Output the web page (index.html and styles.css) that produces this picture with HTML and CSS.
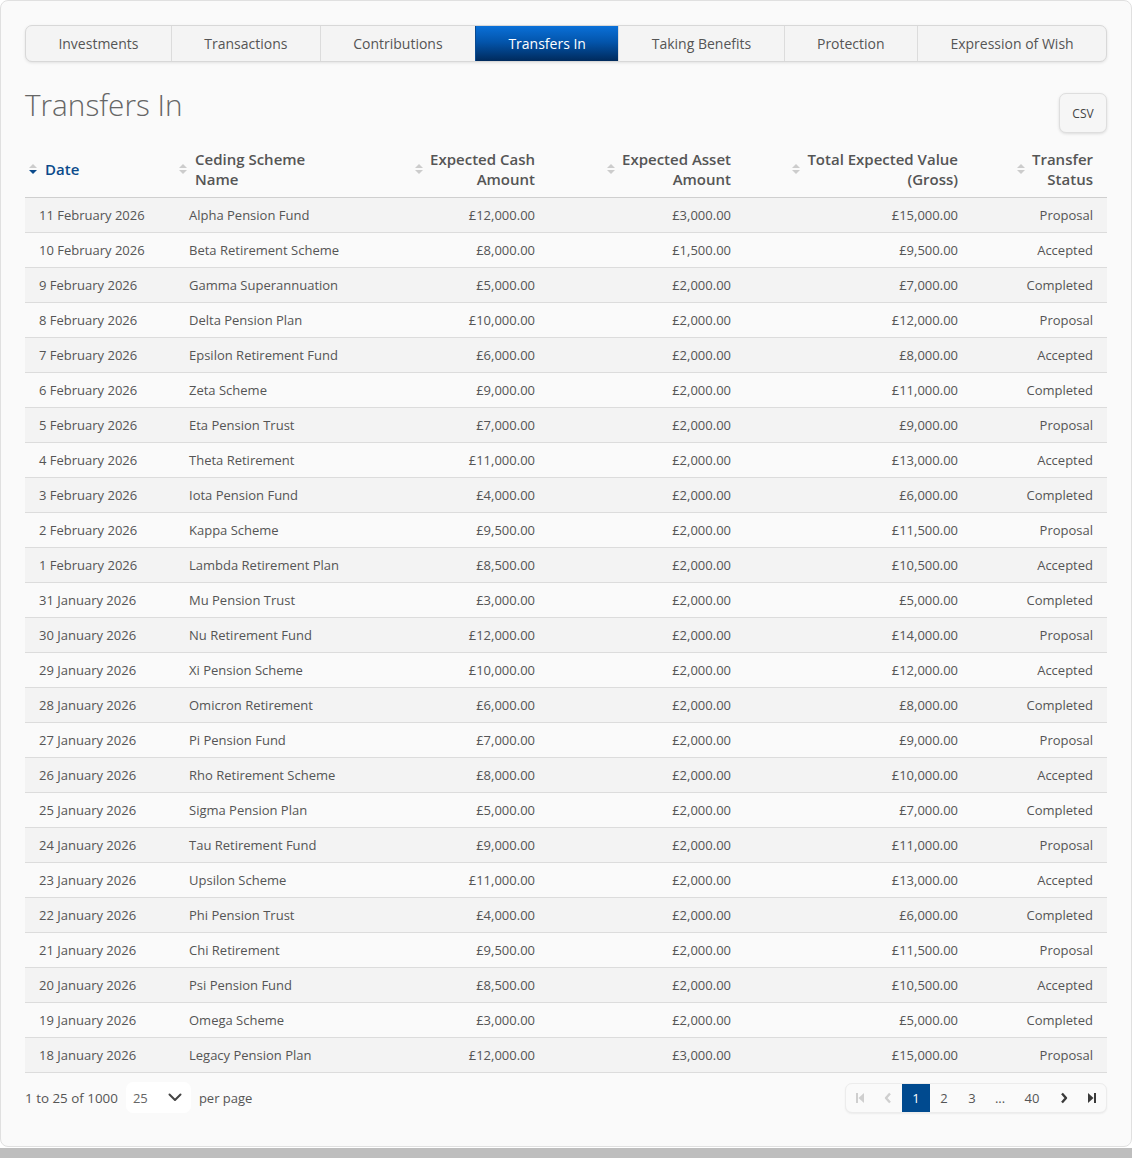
FILE: index.html
```html
<!DOCTYPE html>
<html lang="en">
<head>
<meta charset="utf-8">
<title>Transfers In</title>
<link rel="stylesheet" href="styles.css">
</head>
<body>
<div class="card">
  <nav class="tabs">
    <a class="tab">Investments</a>
    <a class="tab">Transactions</a>
    <a class="tab">Contributions</a>
    <a class="tab active">Transfers In</a>
    <a class="tab">Taking Benefits</a>
    <a class="tab">Protection</a>
    <a class="tab">Expression of Wish</a>
  </nav>

  <div class="title-row">
    <h1 class="title">Transfers In</h1>
    <button class="csv">CSV</button>
  </div>

  <table class="grid">
    <colgroup>
      <col class="c1"><col class="c2"><col class="c3"><col class="c4"><col class="c5"><col class="c6">
    </colgroup>
    <thead>
      <tr>
        <th><div class="th-in left sorted"><span class="sort"><i class="up"></i><i class="down on"></i></span><span class="lbl"><span>Date</span></span></div></th>
        <th><div class="th-in left"><span class="sort"><i class="up"></i><i class="down"></i></span><span class="lbl"><span>Ceding Scheme</span> <span>Name</span></span></div></th>
        <th><div class="th-in right"><span class="sort"><i class="up"></i><i class="down"></i></span><span class="lbl"><span>Expected Cash</span> <span>Amount</span></span></div></th>
        <th><div class="th-in right"><span class="sort"><i class="up"></i><i class="down"></i></span><span class="lbl"><span>Expected Asset</span> <span>Amount</span></span></div></th>
        <th><div class="th-in right"><span class="sort"><i class="up"></i><i class="down"></i></span><span class="lbl"><span>Total Expected Value</span> <span>(Gross)</span></span></div></th>
        <th><div class="th-in right"><span class="sort"><i class="up"></i><i class="down"></i></span><span class="lbl"><span>Transfer</span> <span>Status</span></span></div></th>
      </tr>
    </thead>
    <tbody>
      <tr><td>11 February 2026</td><td>Alpha Pension Fund</td><td class="num">£12,000.00</td><td class="num">£3,000.00</td><td class="num">£15,000.00</td><td class="num">Proposal</td></tr>
      <tr><td>10 February 2026</td><td>Beta Retirement Scheme</td><td class="num">£8,000.00</td><td class="num">£1,500.00</td><td class="num">£9,500.00</td><td class="num">Accepted</td></tr>
      <tr><td>9 February 2026</td><td>Gamma Superannuation</td><td class="num">£5,000.00</td><td class="num">£2,000.00</td><td class="num">£7,000.00</td><td class="num">Completed</td></tr>
      <tr><td>8 February 2026</td><td>Delta Pension Plan</td><td class="num">£10,000.00</td><td class="num">£2,000.00</td><td class="num">£12,000.00</td><td class="num">Proposal</td></tr>
      <tr><td>7 February 2026</td><td>Epsilon Retirement Fund</td><td class="num">£6,000.00</td><td class="num">£2,000.00</td><td class="num">£8,000.00</td><td class="num">Accepted</td></tr>
      <tr><td>6 February 2026</td><td>Zeta Scheme</td><td class="num">£9,000.00</td><td class="num">£2,000.00</td><td class="num">£11,000.00</td><td class="num">Completed</td></tr>
      <tr><td>5 February 2026</td><td>Eta Pension Trust</td><td class="num">£7,000.00</td><td class="num">£2,000.00</td><td class="num">£9,000.00</td><td class="num">Proposal</td></tr>
      <tr><td>4 February 2026</td><td>Theta Retirement</td><td class="num">£11,000.00</td><td class="num">£2,000.00</td><td class="num">£13,000.00</td><td class="num">Accepted</td></tr>
      <tr><td>3 February 2026</td><td>Iota Pension Fund</td><td class="num">£4,000.00</td><td class="num">£2,000.00</td><td class="num">£6,000.00</td><td class="num">Completed</td></tr>
      <tr><td>2 February 2026</td><td>Kappa Scheme</td><td class="num">£9,500.00</td><td class="num">£2,000.00</td><td class="num">£11,500.00</td><td class="num">Proposal</td></tr>
      <tr><td>1 February 2026</td><td>Lambda Retirement Plan</td><td class="num">£8,500.00</td><td class="num">£2,000.00</td><td class="num">£10,500.00</td><td class="num">Accepted</td></tr>
      <tr><td>31 January 2026</td><td>Mu Pension Trust</td><td class="num">£3,000.00</td><td class="num">£2,000.00</td><td class="num">£5,000.00</td><td class="num">Completed</td></tr>
      <tr><td>30 January 2026</td><td>Nu Retirement Fund</td><td class="num">£12,000.00</td><td class="num">£2,000.00</td><td class="num">£14,000.00</td><td class="num">Proposal</td></tr>
      <tr><td>29 January 2026</td><td>Xi Pension Scheme</td><td class="num">£10,000.00</td><td class="num">£2,000.00</td><td class="num">£12,000.00</td><td class="num">Accepted</td></tr>
      <tr><td>28 January 2026</td><td>Omicron Retirement</td><td class="num">£6,000.00</td><td class="num">£2,000.00</td><td class="num">£8,000.00</td><td class="num">Completed</td></tr>
      <tr><td>27 January 2026</td><td>Pi Pension Fund</td><td class="num">£7,000.00</td><td class="num">£2,000.00</td><td class="num">£9,000.00</td><td class="num">Proposal</td></tr>
      <tr><td>26 January 2026</td><td>Rho Retirement Scheme</td><td class="num">£8,000.00</td><td class="num">£2,000.00</td><td class="num">£10,000.00</td><td class="num">Accepted</td></tr>
      <tr><td>25 January 2026</td><td>Sigma Pension Plan</td><td class="num">£5,000.00</td><td class="num">£2,000.00</td><td class="num">£7,000.00</td><td class="num">Completed</td></tr>
      <tr><td>24 January 2026</td><td>Tau Retirement Fund</td><td class="num">£9,000.00</td><td class="num">£2,000.00</td><td class="num">£11,000.00</td><td class="num">Proposal</td></tr>
      <tr><td>23 January 2026</td><td>Upsilon Scheme</td><td class="num">£11,000.00</td><td class="num">£2,000.00</td><td class="num">£13,000.00</td><td class="num">Accepted</td></tr>
      <tr><td>22 January 2026</td><td>Phi Pension Trust</td><td class="num">£4,000.00</td><td class="num">£2,000.00</td><td class="num">£6,000.00</td><td class="num">Completed</td></tr>
      <tr><td>21 January 2026</td><td>Chi Retirement</td><td class="num">£9,500.00</td><td class="num">£2,000.00</td><td class="num">£11,500.00</td><td class="num">Proposal</td></tr>
      <tr><td>20 January 2026</td><td>Psi Pension Fund</td><td class="num">£8,500.00</td><td class="num">£2,000.00</td><td class="num">£10,500.00</td><td class="num">Accepted</td></tr>
      <tr><td>19 January 2026</td><td>Omega Scheme</td><td class="num">£3,000.00</td><td class="num">£2,000.00</td><td class="num">£5,000.00</td><td class="num">Completed</td></tr>
      <tr><td>18 January 2026</td><td>Legacy Pension Plan</td><td class="num">£12,000.00</td><td class="num">£3,000.00</td><td class="num">£15,000.00</td><td class="num">Proposal</td></tr>
    </tbody>
  </table>

  <div class="footer">
    <div class="range">
      <span class="count">1 to 25 of 1000</span>
      <div class="select">
        <span>25</span>
        <svg width="14" height="9" viewBox="0 0 14 9"><polyline points="1.5,1.5 7,7 12.5,1.5" fill="none" stroke="#444" stroke-width="2" stroke-linecap="round" stroke-linejoin="round"/></svg>
      </div>
      <span>per page</span>
    </div>
    <div class="pager">
      <span class="pg dis"><svg width="10" height="12" viewBox="0 0 10 12"><rect x="1" y="1" width="2" height="10" fill="#cfcfcf"/><polygon points="9,1 9,11 3.5,6" fill="#cfcfcf"/></svg></span>
      <span class="pg dis"><svg width="8" height="12" viewBox="0 0 8 12"><polyline points="6,1.5 2,6 6,10.5" fill="none" stroke="#cfcfcf" stroke-width="2.4" stroke-linejoin="round"/></svg></span>
      <span class="pg active">1</span>
      <span class="pg">2</span>
      <span class="pg">3</span>
      <span class="pg">...</span>
      <span class="pg wide">40</span>
      <span class="pg"><svg width="8" height="12" viewBox="0 0 8 12"><polyline points="2,1.5 6,6 2,10.5" fill="none" stroke="#3a3a3a" stroke-width="2.4" stroke-linejoin="round"/></svg></span>
      <span class="pg"><svg width="10" height="12" viewBox="0 0 10 12"><polygon points="1,1 1,11 6.5,6" fill="#3a3a3a"/><rect x="7" y="1" width="2" height="10" fill="#3a3a3a"/></svg></span>
    </div>
  </div>
</div>
<div class="bottom-bar"></div>
</body>
</html>
```

FILE: styles.css
```css
* { box-sizing: border-box; }

html, body {
  margin: 0;
  padding: 0;
  background: #ffffff;
}

body {
  font-family: "Open Sans", "Noto Sans", "Liberation Sans", sans-serif;
  color: #555;
  font-size: 13px;
}

.card {
  width: 1132px;
  margin: 0 0 1px 0;
  background: #fafafa;
  border: 1px solid #e0e0e0;
  border-radius: 8px;
  padding: 24px 24px 33px 24px;
}

.bottom-bar {
  height: 10px;
  background: #bebebe;
}

/* Tabs */
.tabs {
  display: flex;
  height: 37px;
  border: 1px solid #d8d8d8;
  border-radius: 7px;
  background: #f4f4f4;
  box-shadow: 0 1px 3px rgba(0, 0, 0, 0.10);
  overflow: hidden;
}

.tab {
  flex: 1 1 auto;
  display: flex;
  align-items: center;
  justify-content: center;
  padding: 0 32px;
  font-size: 14px;
  font-weight: 500;
  color: #555;
  white-space: nowrap;
  border-left: 1px solid #dcdcdc;
}

.tab:first-child { border-left: none; }

.tab.active {
  color: #fff;
  background: linear-gradient(to bottom, #0a70d8 0%, #0355ac 45%, #002a5c 100%);
  border-left-color: #0a4a90;
}

/* Title */
.title-row {
  display: flex;
  justify-content: space-between;
  align-items: flex-start;
  margin-top: 23px;
}

.title {
  margin: 0;
  font-size: 29.7px;
  line-height: 40px;
  font-weight: 300;
  color: #666;
}

.csv {
  margin-top: 8px;
  width: 48px;
  height: 40px;
  border: 1px solid #dedede;
  border-radius: 7px;
  background: #f6f6f6;
  box-shadow: 0 1px 3px rgba(0, 0, 0, 0.12);
  font-family: inherit;
  font-size: 12px;
  color: #444;
  padding: 0;
}

/* Table */
.grid {
  width: 100%;
  margin-top: 8px;
  border-collapse: collapse;
  table-layout: fixed;
}

.c1 { width: 150px; }
.c2 { width: 210px; }
.c3 { width: 164px; }
.c4 { width: 196px; }
.c5 { width: 227px; }
.c6 { width: 135px; }

.grid th {
  padding: 8px 14px 8px 4px;
  border-bottom: 1px solid #cfcfcf;
  font-size: 15px;
  font-weight: 600;
  line-height: 20px;
  color: #555;
  vertical-align: middle;
}

.th-in {
  display: flex;
  align-items: center;
  gap: 7px;
}

.th-in.left { gap: 8px; }
.th-in.right { justify-content: flex-end; }
.th-in.right .lbl { text-align: right; }
.th-in.left .lbl { text-align: left; }

.th-in.sorted .lbl { color: #0b4a8b; }

.lbl { white-space: nowrap; }
.lbl > span { display: block; }

.sort {
  display: flex;
  flex-direction: column;
  gap: 2px;
  flex: 0 0 auto;
}

.sort i {
  display: block;
  width: 0;
  height: 0;
  border-left: 4.5px solid transparent;
  border-right: 4.5px solid transparent;
}

.sort .up { border-bottom: 4px solid #cccccc; }
.sort .down { border-top: 4px solid #cccccc; }
.sort .down.on { border-top-color: #0b4a8b; }

.grid td {
  padding: 7px 14px;
  height: 35px;
  line-height: 20px;
  font-size: 13px;
  color: #555;
  border-bottom: 1px solid #dcdcdc;
  white-space: nowrap;
}

.grid td.num { text-align: right; }

.grid tbody tr:nth-child(odd) td { background: #f3f3f3; }
.grid tbody tr:nth-child(even) td { background: #fafafa; }

/* Footer */
.footer {
  display: flex;
  justify-content: space-between;
  align-items: center;
  margin-top: 9px;
}

.range {
  display: flex;
  align-items: center;
  gap: 8px;
  font-size: 13px;
  color: #555;
}

.count { font-size: 13.4px; }

.select {
  display: flex;
  align-items: center;
  justify-content: space-between;
  width: 65px;
  height: 31px;
  padding: 0 9px 0 7px;
  background: #fff;
  border-radius: 7px;
  color: #666;
}

.pager {
  display: flex;
  align-items: stretch;
  height: 30px;
  border: 1px solid #ececec;
  border-radius: 7px;
  background: #fafafa;
  box-shadow: 0 1px 2px rgba(0, 0, 0, 0.06);
  overflow: hidden;
}

.pg {
  width: 28px;
  display: flex;
  align-items: center;
  justify-content: center;
  font-size: 13px;
  color: #555;
}

.pg.wide { width: 36px; }

.pg.active {
  background: #004a8f;
  color: #fff;
}
```
